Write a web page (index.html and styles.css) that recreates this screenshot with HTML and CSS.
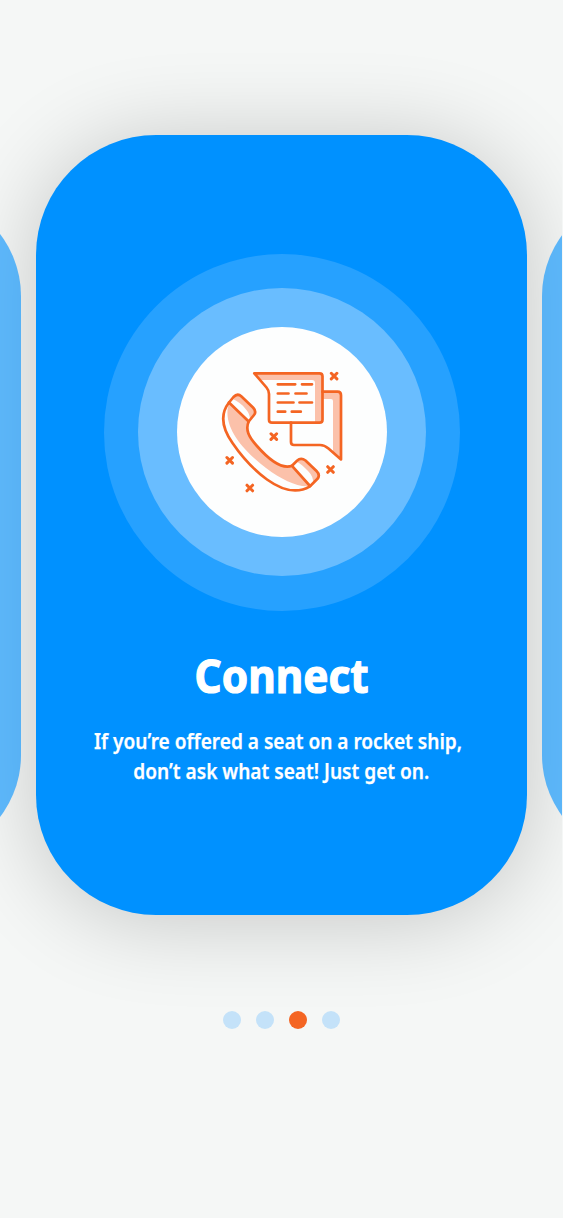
FILE: index.html
```html
<!DOCTYPE html>
<html lang="en">
<head>
<meta charset="utf-8">
<meta name="viewport" content="width=device-width, initial-scale=1">
<title>Connect</title>
<link rel="stylesheet" href="styles.css">
</head>
<body>
<main class="onboarding">
  <div class="carousel">
    <div class="side-card"></div>
    <section class="card">
      <div class="halo halo-outer">
        <div class="halo halo-middle">
          <div class="halo halo-inner">
            <svg class="icon" viewBox="217 367 130 130" aria-hidden="true">
              <g class="tint">
                <path d="M254 373H323V423H315V383Q315 380 312 380H260Z"/>
                <path d="M323 391H338Q341.500 391 341.500 395V460L333 452V401Q333 399 331 399H323Z"/>
                <path d="M229 403L248.500 421.500C246 430 248 436 257 446.500C268 459 281 469 292 466L310 486C299 488 282 480 266 468C245 452 221 427 229 403Z"/>
                <path d="M233 399Q237 393 241 396L253 407.500Q257 411 254 415L250 419.500Q250 414 246 409.500C242 404 237 401 233 399Z"/>
                <path d="M296 461.500Q300 457 304 460L316 470.500Q320 474 318 478L313 483.500Q314 477 308 471C304 467 300 463 296 461.500Z"/>
              </g>
              <g class="outline">
                <path d="M254.300 373.300H319.500Q322.500 373.300 322.500 376.300V419.700Q322.500 422.700 319.500 422.700H272Q269 422.700 269 419.700V394Q269 390.500 266.500 387.500Z"/>
                <path d="M322.500 391.700H337.500Q341 391.700 341 395.200V459.500L328.500 448.500Q324.500 445 320 445H294Q291 445 291 442V422.700"/>
                <path d="M229 402.500L233.500 397Q237.500 392.800 241.500 396.500L253 407.500Q256.800 411.500 254 415L248.700 421.500C245 430 249 437 256.500 445.500C267 457.500 281 470 292 465.800L297 460.700Q301 457 305.500 460.500L316.500 471Q320.500 475 317.500 478.800L310 486.300C298 493.500 283 491 267 479.500C254 470 241 455.500 232.500 443C222 428 220 414 229 402.500Z"/>
                <path d="M229 402.500L248.700 421.500M292 465.800L310 486"/>
                <path d="M277.800 384.300H295.200M302 384.300H312M277.800 393.500H288.500M295.500 393.500H306.500M277.800 402.500H293.500M299.500 402.500H312M277.800 411.700H285.200M291.800 411.700H300.800"/>
                <path class="sparks" d="M331.300 373.300l5.600 5.600m0-5.600l-5.600 5.600M271 433.800l5.600 5.600m0-5.600l-5.600 5.600M226.900 457.500l5.600 5.600m0-5.600l-5.600 5.600M247 485.200l5.600 5.600m0-5.600l-5.600 5.600M327.700 466.700l5.600 5.600m0-5.600l-5.600 5.600"/>
              </g>
            </svg>
          </div>
        </div>
      </div>
      <h1 class="title">Connect</h1>
      <p class="copy"><span class="line line-first">If you’re offered a seat on a rocket ship,</span><span class="line line-second">don’t ask what seat! Just get on.</span></p>
    </section>
    <div class="side-card"></div>
  </div>
  <nav class="dots">
    <span class="dot"></span>
    <span class="dot"></span>
    <span class="dot dot-active"></span>
    <span class="dot"></span>
  </nav>
</main>
</body>
</html>
```
FILE: styles.css
```css
* { box-sizing: border-box; }
body {
  margin: 0;
  background: #f5f7f6;
  font-family: "Noto Sans", "Open Sans", sans-serif;
}
.onboarding {
  width: 562px;
  height: 1218px;
  padding-top: 135px;
  overflow: hidden;
}
.carousel {
  display: flex;
  align-items: center;
  justify-content: center;
  gap: 15px;
  width: 562.5px;
}
.side-card {
  flex: none;
  width: 417px;
  height: 663px;
  border-radius: 102px;
  background: rgba(0, 145, 255, 0.61);
}
.side-card:first-child { position: relative; z-index: 1; }
.card {
  flex: none;
  display: flex;
  flex-direction: column;
  align-items: center;
  width: 490.5px;
  height: 780px;
  padding-top: 118.5px;
  padding-left: 1.5px;
  border-radius: 120px;
  background: #0091ff;
  color: #fff;
  box-shadow: 0 5px 90px rgba(0, 0, 0, 0.2);
}
.halo {
  flex: none;
  display: flex;
  align-items: center;
  justify-content: center;
  border-radius: 50%;
}
.halo-outer { width: 356.5px; height: 357px; background: #26a1ff; }
.halo-middle { width: 288px; height: 288px; background: #69bdff; }
.halo-inner { width: 210px; height: 210px; background: #fdfefe; }
.icon { width: 130px; height: 130px; }
.tint { fill: #fbc1aa; }
.outline {
  fill: none;
  stroke: #f46523;
  stroke-width: 2.7;
  stroke-linecap: round;
  stroke-linejoin: round;
}
.sparks { stroke-width: 3; }
.title {
  margin: 29.5px 0 0;
  font-size: 46px;
  line-height: 70px;
  font-weight: 700;
  white-space: nowrap;
  -webkit-text-stroke: 1.2px #fff;
  transform: scaleX(0.92);
}
.copy {
  display: flex;
  flex-direction: column;
  align-items: center;
  margin: 15.5px 0 0;
  font-size: 21px;
  line-height: 30px;
  font-weight: 600;
  -webkit-text-stroke: 0.25px #fff;
}
.line { white-space: nowrap; }
.line-first { transform: translateX(-3.5px) scaleX(0.909); }
.line-second { transform: translateX(-0.5px) scaleX(0.909); }
.dots {
  display: flex;
  justify-content: center;
  gap: 15px;
  margin-top: 96px;
  padding-left: 1.5px;
}
.dot {
  width: 18px;
  height: 18px;
  border-radius: 50%;
  background: #c4e2f9;
}
.dot-active { background: #f46523; }
```
